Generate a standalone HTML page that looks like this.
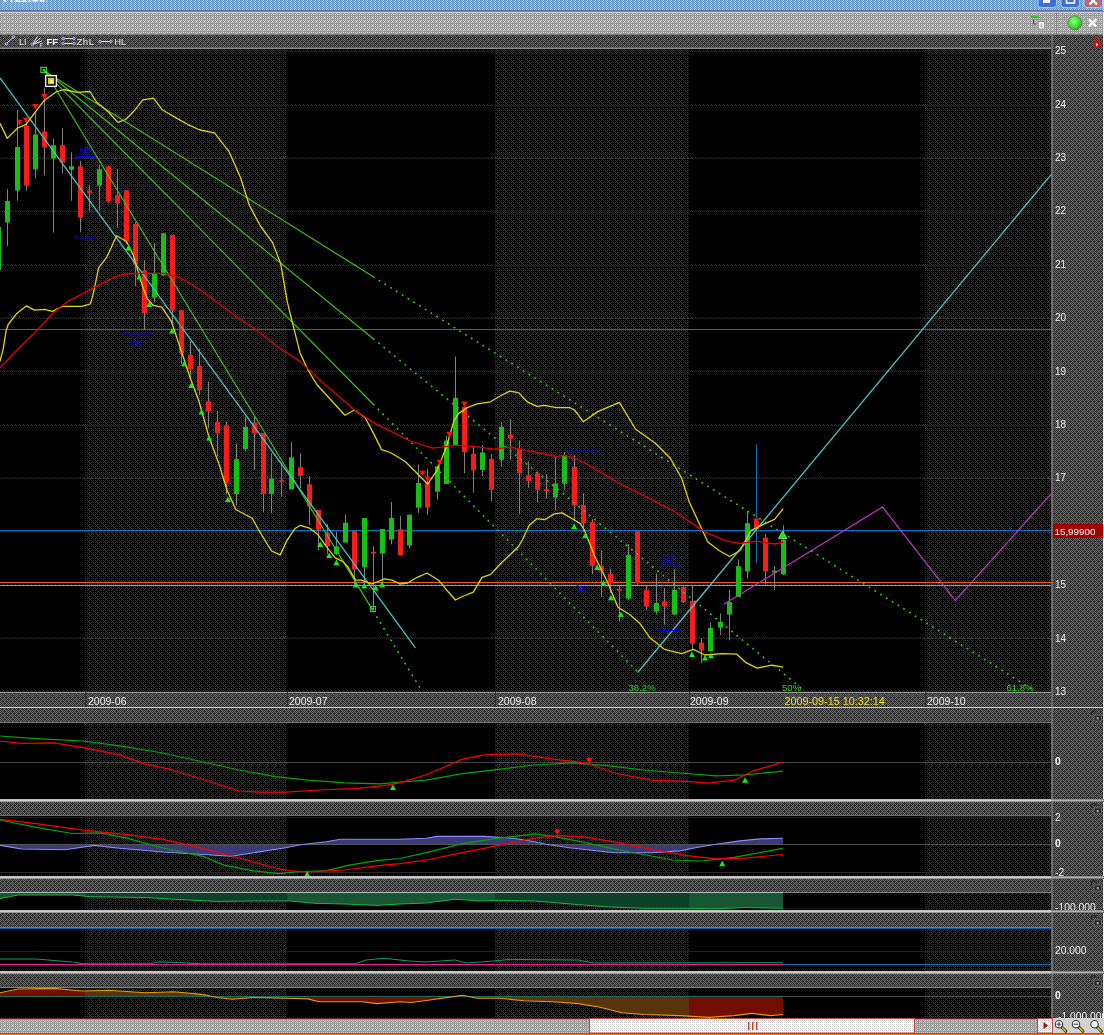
<!DOCTYPE html>
<html><head><meta charset="utf-8"><title>Chart</title>
<style>
html,body{margin:0;padding:0;background:#484848;overflow:hidden}
svg{display:block;will-change:transform}
text{font-family:"Liberation Sans",sans-serif}
</style></head><body>
<svg width="1104" height="1035" viewBox="0 0 1104 1035" font-family="'Liberation Sans', sans-serif">
<defs>
<pattern id="pB" width="8" height="8" patternUnits="userSpaceOnUse" shape-rendering="crispEdges">
<rect width="8" height="8" fill="#000000"/>
<path d="M1 0h1v1h-1zM3 0h1v1h-1zM5 0h1v1h-1zM7 0h1v1h-1zM1 2h1v1h-1zM3 2h1v1h-1zM5 2h1v1h-1zM7 2h1v1h-1zM1 4h1v1h-1zM3 4h1v1h-1zM5 4h1v1h-1zM7 4h1v1h-1zM1 6h1v1h-1zM3 6h1v1h-1zM5 6h1v1h-1zM7 6h1v1h-1zM4 1h1v1h-1zM0 5h1v1h-1zM4 5h1v1h-1zM0 1h1v1h-1zM2 7h1v1h-1zM6 3h1v1h-1z" fill="#333333"/>
</pattern>
<pattern id="pC" width="8" height="8" patternUnits="userSpaceOnUse" shape-rendering="crispEdges">
<rect width="8" height="8" fill="#333333"/>
<path d="M1 0h1v1h-1zM3 0h1v1h-1zM5 0h1v1h-1zM7 0h1v1h-1zM1 2h1v1h-1zM3 2h1v1h-1zM5 2h1v1h-1zM7 2h1v1h-1zM1 4h1v1h-1zM3 4h1v1h-1zM5 4h1v1h-1zM7 4h1v1h-1zM1 6h1v1h-1zM3 6h1v1h-1zM5 6h1v1h-1zM7 6h1v1h-1zM4 1h1v1h-1zM0 5h1v1h-1zM4 5h1v1h-1zM0 1h1v1h-1zM2 7h1v1h-1zM6 3h1v1h-1zM6 7h1v1h-1zM0 7h1v1h-1zM2 3h1v1h-1zM4 3h1v1h-1z" fill="#666666"/>
</pattern>
<pattern id="pA" width="8" height="8" patternUnits="userSpaceOnUse" shape-rendering="crispEdges">
<rect width="8" height="8" fill="#999999"/>
<path d="M1 0h1v1h-1zM3 0h1v1h-1zM5 0h1v1h-1zM7 0h1v1h-1zM1 2h1v1h-1zM3 2h1v1h-1zM5 2h1v1h-1zM7 2h1v1h-1zM1 4h1v1h-1zM3 4h1v1h-1zM5 4h1v1h-1zM7 4h1v1h-1zM1 6h1v1h-1zM3 6h1v1h-1zM5 6h1v1h-1zM7 6h1v1h-1zM4 1h1v1h-1zM0 5h1v1h-1zM4 5h1v1h-1z" fill="#cccccc"/>
</pattern>
<pattern id="pD" width="8" height="8" patternUnits="userSpaceOnUse" shape-rendering="crispEdges">
<rect width="8" height="8" fill="#ffffff"/>
<path d="M0 0h1v1h-1zM2 0h1v1h-1zM4 0h1v1h-1zM6 0h1v1h-1zM0 2h1v1h-1zM2 2h1v1h-1zM4 2h1v1h-1zM6 2h1v1h-1zM0 4h1v1h-1zM2 4h1v1h-1zM4 4h1v1h-1zM6 4h1v1h-1zM0 6h1v1h-1zM2 6h1v1h-1zM4 6h1v1h-1zM6 6h1v1h-1zM1 5h1v1h-1zM5 5h1v1h-1zM1 1h1v1h-1z" fill="#cccccc"/>
</pattern>
<pattern id="pT" width="4" height="2" patternUnits="userSpaceOnUse" shape-rendering="crispEdges">
<rect width="4" height="2" fill="#6699cc"/>
<path d="M1 0h1v1h-1zM0 1h1v1h-1z" fill="#9999ff"/><path d="M3 0h1v1h-1zM2 1h1v1h-1z" fill="#99ccff"/>
</pattern>
</defs>
<rect x="0" y="0" width="1104" height="1035" fill="url(#pC)"/>
<rect x="0" y="0" width="1104" height="10" fill="url(#pT)"/>
<rect x="0" y="10" width="1104" height="1" fill="#646eaa"/>
<rect x="0" y="11" width="1104" height="1" fill="#ff6600"/>
<rect x="0" y="12" width="1104" height="1" fill="#c6cece"/>
<rect x="0" y="13" width="1104" height="21" fill="url(#pA)"/>
<rect x="0" y="34" width="1104" height="1" fill="#808080"/>
<rect x="0" y="35" width="1104" height="12" fill="url(#pC)"/>
<rect x="0" y="47" width="1051" height="1" fill="#666"/>
<rect x="0" y="48" width="1051" height="1" fill="#8a8a8a"/>
<g>
<rect x="1038" y="-6" width="18.5" height="13.5" rx="3" fill="#3b6fd9" stroke="#a8c8ff" stroke-width="1"/>
<rect x="1061" y="-6" width="18.5" height="13.5" rx="3" fill="#3b6fd9" stroke="#a8c8ff" stroke-width="1"/>
<rect x="1084" y="-6" width="18.5" height="13.5" rx="3" fill="#b06a78" stroke="#a8c8ff" stroke-width="1"/>
<rect x="1043" y="0" width="7" height="3" fill="#fff"/>
<rect x="1066.5" y="-4" width="8" height="7" fill="none" stroke="#fff" stroke-width="1.6"/>
<path d="M1089.5 -3 L1097 4.5 M1097 -3 L1089.5 4.5" stroke="#fff" stroke-width="2.2"/>
</g>
<text x="2" y="1.6" fill="#fff" font-size="13" font-weight="bold">7:11:36</text>
<rect x="1056" y="13" width="1" height="21" fill="#808080"/>
<defs><radialGradient id="gb" cx="0.45" cy="0.4" r="0.6"><stop offset="0" stop-color="#9cff8c"/><stop offset="0.6" stop-color="#44e23a"/><stop offset="1" stop-color="#2aa82a"/></radialGradient></defs>
<circle cx="1074.8" cy="22.8" r="7" fill="url(#gb)" stroke="#4a8a4a" stroke-width="0.8"/>
<path d="M1088.8 19 L1096.4 26.6 M1096.4 19 L1088.8 26.6" stroke="#fff" stroke-width="2.2"/>
<rect x="1031" y="16" width="8" height="2" fill="#22cc22"/>
<path d="M1033.5 19 v5 h3" fill="none" stroke="#555" stroke-width="1"/>
<rect x="1038.5" y="21.5" width="6" height="7.5" fill="#fff" stroke="#888" stroke-width="0.8"/>
<rect x="1040.5" y="23.5" width="2" height="4" fill="#bbb"/>
<g stroke="#e4e4e4" stroke-width="1" fill="none">
<path d="M6.5 43.5 L13 37.5"/>
<path d="M32.5 44.5 L37.5 36.5 M32.5 44.5 L40.5 38 M32.5 44.5 L42 41"/>
<path d="M63.5 38.5 H73.5 M63.5 43.5 H73.5"/>
<path d="M100.5 41.5 H110.5"/>
</g>
<circle cx="6.5" cy="44" r="1.3" fill="#6060e0" stroke="#ddd" stroke-width="0.6"/>
<circle cx="13.5" cy="37" r="1.3" fill="#6060e0" stroke="#ddd" stroke-width="0.6"/>
<circle cx="32.5" cy="44.5" r="1.3" fill="#6060e0" stroke="#ddd" stroke-width="0.6"/>
<circle cx="63" cy="38.5" r="1.3" fill="#6060e0" stroke="#ddd" stroke-width="0.6"/>
<circle cx="74" cy="38.5" r="1.3" fill="#6060e0" stroke="#ddd" stroke-width="0.6"/>
<circle cx="63" cy="43.5" r="1.3" fill="#6060e0" stroke="#ddd" stroke-width="0.6"/>
<circle cx="74" cy="43.5" r="1.3" fill="#6060e0" stroke="#ddd" stroke-width="0.6"/>
<circle cx="100" cy="41.5" r="1.3" fill="#6060e0" stroke="#ddd" stroke-width="0.6"/>
<circle cx="111" cy="41.5" r="1.3" fill="#6060e0" stroke="#ddd" stroke-width="0.6"/>
<text x="19" y="45" fill="#e4e4e4" font-size="9">LI</text>
<text x="39.5" y="46.5" fill="#e4e4e4" font-size="5.5">F</text>
<text x="46.5" y="45" fill="#fff" font-size="9.5" font-weight="bold">FF</text>
<text x="76.5" y="45" fill="#e4e4e4" font-size="9.6" letter-spacing="0.5">ZhL</text>
<text x="114.5" y="45" fill="#e4e4e4" font-size="9">HL</text>
<rect x="0" y="49" width="1051" height="643" fill="#000"/>
<rect x="85" y="49" width="202" height="643" fill="url(#pB)"/>
<rect x="495" y="49" width="194" height="643" fill="url(#pB)"/>
<rect x="925" y="49" width="126" height="643" fill="url(#pB)"/>
<clipPath id="cc"><rect x="0" y="49" width="1051" height="643"/></clipPath>
<g clip-path="url(#cc)">
<path d="M0 51.5H1051" stroke="#333" stroke-width="1" stroke-dasharray="1 1" shape-rendering="crispEdges"/>
<path d="M3 50.5H1051" stroke="#333" stroke-width="1" stroke-dasharray="1 3" shape-rendering="crispEdges"/>
<path d="M0 105.5H1051" stroke="#333" stroke-width="1" stroke-dasharray="1 1" shape-rendering="crispEdges"/>
<path d="M3 104.5H1051" stroke="#333" stroke-width="1" stroke-dasharray="1 3" shape-rendering="crispEdges"/>
<path d="M0 158.5H1051" stroke="#333" stroke-width="1" stroke-dasharray="1 1" shape-rendering="crispEdges"/>
<path d="M3 157.5H1051" stroke="#333" stroke-width="1" stroke-dasharray="1 3" shape-rendering="crispEdges"/>
<path d="M0 211.5H1051" stroke="#333" stroke-width="1" stroke-dasharray="1 1" shape-rendering="crispEdges"/>
<path d="M3 210.5H1051" stroke="#333" stroke-width="1" stroke-dasharray="1 3" shape-rendering="crispEdges"/>
<path d="M0 265.5H1051" stroke="#333" stroke-width="1" stroke-dasharray="1 1" shape-rendering="crispEdges"/>
<path d="M3 264.5H1051" stroke="#333" stroke-width="1" stroke-dasharray="1 3" shape-rendering="crispEdges"/>
<path d="M0 318.5H1051" stroke="#333" stroke-width="1" stroke-dasharray="1 1" shape-rendering="crispEdges"/>
<path d="M3 317.5H1051" stroke="#333" stroke-width="1" stroke-dasharray="1 3" shape-rendering="crispEdges"/>
<path d="M0 371.5H1051" stroke="#333" stroke-width="1" stroke-dasharray="1 1" shape-rendering="crispEdges"/>
<path d="M3 370.5H1051" stroke="#333" stroke-width="1" stroke-dasharray="1 3" shape-rendering="crispEdges"/>
<path d="M0 425.5H1051" stroke="#333" stroke-width="1" stroke-dasharray="1 1" shape-rendering="crispEdges"/>
<path d="M3 424.5H1051" stroke="#333" stroke-width="1" stroke-dasharray="1 3" shape-rendering="crispEdges"/>
<path d="M0 478.5H1051" stroke="#333" stroke-width="1" stroke-dasharray="1 1" shape-rendering="crispEdges"/>
<path d="M3 477.5H1051" stroke="#333" stroke-width="1" stroke-dasharray="1 3" shape-rendering="crispEdges"/>
<path d="M0 531.5H1051" stroke="#333" stroke-width="1" stroke-dasharray="1 1" shape-rendering="crispEdges"/>
<path d="M3 530.5H1051" stroke="#333" stroke-width="1" stroke-dasharray="1 3" shape-rendering="crispEdges"/>
<path d="M0 585.5H1051" stroke="#333" stroke-width="1" stroke-dasharray="1 1" shape-rendering="crispEdges"/>
<path d="M3 584.5H1051" stroke="#333" stroke-width="1" stroke-dasharray="1 3" shape-rendering="crispEdges"/>
<path d="M0 638.5H1051" stroke="#333" stroke-width="1" stroke-dasharray="1 1" shape-rendering="crispEdges"/>
<path d="M3 637.5H1051" stroke="#333" stroke-width="1" stroke-dasharray="1 3" shape-rendering="crispEdges"/>
<path d="M0 691.5H1051" stroke="#333" stroke-width="1" stroke-dasharray="1 1" shape-rendering="crispEdges"/>
<path d="M3 690.5H1051" stroke="#333" stroke-width="1" stroke-dasharray="1 3" shape-rendering="crispEdges"/>
<rect x="0" y="329" width="1051" height="1" fill="#1070c0"/>
<rect x="0" y="530" width="1051" height="1" fill="#1070c0"/>
<rect x="0" y="582" width="1051" height="1" fill="#f06000"/>
<rect x="0" y="585" width="1051" height="1" fill="#60c838"/>
<rect x="-2" y="200.0" width="1" height="90.0" fill="#808080"/>
<rect x="-4" y="227.0" width="5" height="43.0" fill="#14c014"/>
<rect x="7" y="189.0" width="1" height="57.0" fill="#808080"/>
<rect x="5" y="201.0" width="5" height="21.5" fill="#14c014"/>
<rect x="17" y="110.0" width="1" height="90.7" fill="#808080"/>
<rect x="15" y="147.0" width="5" height="43.6" fill="#14c014"/>
<rect x="26" y="122.4" width="1" height="68.2" fill="#808080"/>
<rect x="24" y="126.0" width="5" height="59.6" fill="#fa1c1c"/>
<rect x="35" y="111.8" width="1" height="66.6" fill="#808080"/>
<rect x="33" y="134.4" width="5" height="35.0" fill="#14c014"/>
<rect x="44" y="87.6" width="1" height="87.9" fill="#808080"/>
<rect x="42" y="131.5" width="5" height="16.0" fill="#fa1c1c"/>
<rect x="53" y="138.8" width="1" height="93.7" fill="#808080"/>
<rect x="51" y="145.2" width="5" height="13.3" fill="#14c014"/>
<rect x="62" y="128.2" width="1" height="45.4" fill="#808080"/>
<rect x="60" y="145.2" width="5" height="17.2" fill="#fa1c1c"/>
<rect x="71" y="152.3" width="1" height="48.4" fill="#808080"/>
<rect x="69" y="166.3" width="5" height="3.4" fill="#14c014"/>
<rect x="80" y="161.0" width="1" height="71.5" fill="#808080"/>
<rect x="78" y="166.3" width="5" height="51.2" fill="#fa1c1c"/>
<rect x="89" y="185.2" width="1" height="26.1" fill="#808080"/>
<rect x="87" y="190.4" width="5" height="2.9" fill="#fa1c1c"/>
<rect x="99" y="165.0" width="1" height="45.3" fill="#808080"/>
<rect x="97" y="169.2" width="5" height="16.4" fill="#14c014"/>
<rect x="108" y="165.9" width="1" height="36.7" fill="#808080"/>
<rect x="106" y="166.3" width="5" height="35.3" fill="#fa1c1c"/>
<rect x="117" y="168.8" width="1" height="58.9" fill="#808080"/>
<rect x="115" y="195.2" width="5" height="8.4" fill="#fa1c1c"/>
<rect x="126" y="190.0" width="1" height="54.0" fill="#808080"/>
<rect x="124" y="190.4" width="5" height="50.9" fill="#fa1c1c"/>
<rect x="135" y="222.0" width="1" height="64.0" fill="#808080"/>
<rect x="133" y="224.0" width="5" height="40.7" fill="#fa1c1c"/>
<rect x="144" y="260.0" width="1" height="69.5" fill="#808080"/>
<rect x="142" y="270.5" width="5" height="42.5" fill="#fa1c1c"/>
<rect x="154" y="243.0" width="1" height="59.0" fill="#808080"/>
<rect x="152" y="273.4" width="5" height="24.2" fill="#14c014"/>
<rect x="163" y="233.2" width="1" height="42.8" fill="#808080"/>
<rect x="161" y="233.2" width="5" height="42.2" fill="#14c014"/>
<rect x="172" y="235.2" width="1" height="88.5" fill="#808080"/>
<rect x="170" y="235.2" width="5" height="75.3" fill="#fa1c1c"/>
<rect x="181" y="310.0" width="1" height="54.0" fill="#808080"/>
<rect x="179" y="310.0" width="5" height="43.6" fill="#fa1c1c"/>
<rect x="190" y="341.0" width="1" height="39.0" fill="#808080"/>
<rect x="188" y="355.0" width="5" height="14.0" fill="#fa1c1c"/>
<rect x="199" y="349.0" width="1" height="46.0" fill="#808080"/>
<rect x="197" y="366.0" width="5" height="24.0" fill="#fa1c1c"/>
<rect x="208" y="382.0" width="1" height="46.0" fill="#808080"/>
<rect x="206" y="401.3" width="5" height="10.0" fill="#fa1c1c"/>
<rect x="217" y="411.0" width="1" height="45.0" fill="#808080"/>
<rect x="215" y="422.0" width="5" height="11.0" fill="#fa1c1c"/>
<rect x="226" y="421.5" width="1" height="72.5" fill="#808080"/>
<rect x="224" y="425.4" width="5" height="58.0" fill="#fa1c1c"/>
<rect x="236" y="443.4" width="1" height="62.2" fill="#808080"/>
<rect x="234" y="459.2" width="5" height="34.8" fill="#14c014"/>
<rect x="245" y="416.7" width="1" height="34.8" fill="#808080"/>
<rect x="243" y="427.0" width="5" height="22.0" fill="#14c014"/>
<rect x="254" y="416.7" width="1" height="53.2" fill="#808080"/>
<rect x="252" y="422.5" width="5" height="10.5" fill="#fa1c1c"/>
<rect x="263" y="433.0" width="1" height="79.4" fill="#808080"/>
<rect x="261" y="433.0" width="5" height="61.0" fill="#fa1c1c"/>
<rect x="271" y="453.4" width="1" height="59.9" fill="#808080"/>
<rect x="269" y="478.6" width="5" height="15.4" fill="#14c014"/>
<rect x="281" y="463.0" width="1" height="34.0" fill="#808080"/>
<rect x="279" y="480.0" width="5" height="1.6" fill="#fa1c1c"/>
<rect x="291" y="442.2" width="1" height="47.0" fill="#808080"/>
<rect x="289" y="457.3" width="5" height="31.9" fill="#14c014"/>
<rect x="300" y="453.4" width="1" height="34.8" fill="#808080"/>
<rect x="298" y="467.3" width="5" height="8.7" fill="#fa1c1c"/>
<rect x="309" y="476.0" width="1" height="49.0" fill="#808080"/>
<rect x="307" y="484.3" width="5" height="22.3" fill="#fa1c1c"/>
<rect x="318" y="509.9" width="1" height="40.1" fill="#808080"/>
<rect x="316" y="509.9" width="5" height="19.9" fill="#fa1c1c"/>
<rect x="327" y="524.0" width="1" height="30.0" fill="#808080"/>
<rect x="325" y="532.7" width="5" height="13.5" fill="#fa1c1c"/>
<rect x="336" y="531.7" width="1" height="23.3" fill="#808080"/>
<rect x="334" y="546.2" width="5" height="7.8" fill="#14c014"/>
<rect x="345" y="514.3" width="1" height="28.2" fill="#808080"/>
<rect x="343" y="522.8" width="5" height="19.7" fill="#14c014"/>
<rect x="354" y="531.0" width="1" height="54.0" fill="#808080"/>
<rect x="352" y="531.0" width="5" height="38.5" fill="#fa1c1c"/>
<rect x="364" y="518.0" width="1" height="67.0" fill="#808080"/>
<rect x="362" y="518.0" width="5" height="49.3" fill="#14c014"/>
<rect x="373" y="546.4" width="1" height="61.8" fill="#808080"/>
<rect x="371" y="551.8" width="5" height="1.6" fill="#fa1c1c"/>
<rect x="382" y="529.0" width="1" height="56.0" fill="#808080"/>
<rect x="380" y="529.0" width="5" height="24.5" fill="#14c014"/>
<rect x="391" y="502.0" width="1" height="42.4" fill="#808080"/>
<rect x="389" y="518.0" width="5" height="21.5" fill="#14c014"/>
<rect x="400" y="516.0" width="1" height="39.6" fill="#808080"/>
<rect x="398" y="529.2" width="5" height="26.1" fill="#fa1c1c"/>
<rect x="409" y="514.5" width="1" height="33.8" fill="#808080"/>
<rect x="407" y="514.7" width="5" height="30.7" fill="#14c014"/>
<rect x="418" y="464.6" width="1" height="48.4" fill="#808080"/>
<rect x="416" y="483.0" width="5" height="24.7" fill="#14c014"/>
<rect x="427" y="468.5" width="1" height="46.4" fill="#808080"/>
<rect x="425" y="482.0" width="5" height="25.7" fill="#fa1c1c"/>
<rect x="437" y="465.6" width="1" height="33.8" fill="#808080"/>
<rect x="435" y="466.6" width="5" height="25.1" fill="#14c014"/>
<rect x="446" y="435.7" width="1" height="48.3" fill="#808080"/>
<rect x="444" y="440.5" width="5" height="43.5" fill="#14c014"/>
<rect x="455" y="356.4" width="1" height="88.9" fill="#808080"/>
<rect x="453" y="398.0" width="5" height="47.3" fill="#14c014"/>
<rect x="464" y="405.7" width="1" height="67.6" fill="#808080"/>
<rect x="462" y="406.7" width="5" height="45.3" fill="#fa1c1c"/>
<rect x="473" y="447.2" width="1" height="45.5" fill="#808080"/>
<rect x="471" y="454.0" width="5" height="16.4" fill="#fa1c1c"/>
<rect x="482" y="445.3" width="1" height="30.9" fill="#808080"/>
<rect x="480" y="452.5" width="5" height="17.4" fill="#14c014"/>
<rect x="491" y="454.0" width="1" height="47.4" fill="#808080"/>
<rect x="489" y="458.8" width="5" height="31.0" fill="#fa1c1c"/>
<rect x="501" y="422.0" width="1" height="44.6" fill="#808080"/>
<rect x="499" y="427.0" width="5" height="32.8" fill="#14c014"/>
<rect x="510" y="418.8" width="1" height="41.0" fill="#808080"/>
<rect x="508" y="434.7" width="5" height="3.9" fill="#fa1c1c"/>
<rect x="519" y="440.5" width="1" height="73.4" fill="#808080"/>
<rect x="517" y="449.2" width="5" height="24.1" fill="#fa1c1c"/>
<rect x="528" y="461.7" width="1" height="26.1" fill="#808080"/>
<rect x="526" y="475.3" width="5" height="5.7" fill="#fa1c1c"/>
<rect x="537" y="473.3" width="1" height="29.0" fill="#808080"/>
<rect x="535" y="473.3" width="5" height="16.5" fill="#fa1c1c"/>
<rect x="546" y="474.3" width="1" height="24.2" fill="#808080"/>
<rect x="544" y="489.2" width="5" height="1.9" fill="#fa1c1c"/>
<rect x="555" y="456.0" width="1" height="54.0" fill="#808080"/>
<rect x="553" y="483.4" width="5" height="14.1" fill="#14c014"/>
<rect x="564" y="452.0" width="1" height="37.8" fill="#808080"/>
<rect x="562" y="455.2" width="5" height="28.5" fill="#14c014"/>
<rect x="574" y="455.0" width="1" height="66.2" fill="#808080"/>
<rect x="572" y="467.0" width="5" height="38.1" fill="#fa1c1c"/>
<rect x="583" y="493.2" width="1" height="38.7" fill="#808080"/>
<rect x="581" y="505.1" width="5" height="18.3" fill="#fa1c1c"/>
<rect x="592" y="519.0" width="1" height="55.0" fill="#808080"/>
<rect x="590" y="521.7" width="5" height="44.1" fill="#fa1c1c"/>
<rect x="601" y="550.7" width="1" height="46.3" fill="#808080"/>
<rect x="599" y="565.8" width="5" height="5.8" fill="#fa1c1c"/>
<rect x="610" y="568.7" width="1" height="24.1" fill="#808080"/>
<rect x="608" y="574.0" width="5" height="9.2" fill="#fa1c1c"/>
<rect x="619" y="585.5" width="1" height="36.2" fill="#808080"/>
<rect x="617" y="589.0" width="5" height="1.7" fill="#fa1c1c"/>
<rect x="628" y="544.0" width="1" height="56.0" fill="#808080"/>
<rect x="626" y="555.0" width="5" height="43.6" fill="#14c014"/>
<rect x="637" y="531.0" width="1" height="54.0" fill="#808080"/>
<rect x="635" y="531.0" width="5" height="52.2" fill="#fa1c1c"/>
<rect x="646" y="585.5" width="1" height="24.6" fill="#808080"/>
<rect x="644" y="589.9" width="5" height="16.5" fill="#fa1c1c"/>
<rect x="656" y="574.0" width="1" height="40.5" fill="#808080"/>
<rect x="654" y="603.0" width="5" height="8.6" fill="#14c014"/>
<rect x="664" y="587.8" width="1" height="36.8" fill="#808080"/>
<rect x="662" y="601.4" width="5" height="5.0" fill="#fa1c1c"/>
<rect x="674" y="569.0" width="1" height="45.5" fill="#808080"/>
<rect x="672" y="589.9" width="5" height="24.6" fill="#14c014"/>
<rect x="683" y="585.5" width="1" height="17.5" fill="#808080"/>
<rect x="681" y="587.0" width="5" height="15.0" fill="#fa1c1c"/>
<rect x="692" y="585.6" width="1" height="63.3" fill="#808080"/>
<rect x="690" y="601.0" width="5" height="42.6" fill="#fa1c1c"/>
<rect x="701" y="638.0" width="1" height="25.2" fill="#808080"/>
<rect x="699" y="642.7" width="5" height="7.8" fill="#fa1c1c"/>
<rect x="710" y="622.3" width="1" height="29.3" fill="#808080"/>
<rect x="708" y="628.0" width="5" height="23.3" fill="#14c014"/>
<rect x="720" y="613.6" width="1" height="21.4" fill="#808080"/>
<rect x="718" y="621.8" width="5" height="5.8" fill="#14c014"/>
<rect x="729" y="590.0" width="1" height="50.3" fill="#808080"/>
<rect x="727" y="602.0" width="5" height="12.6" fill="#14c014"/>
<rect x="738" y="559.6" width="1" height="37.4" fill="#808080"/>
<rect x="736" y="566.2" width="5" height="30.7" fill="#14c014"/>
<rect x="747" y="511.0" width="1" height="67.5" fill="#808080"/>
<rect x="745" y="523.1" width="5" height="48.3" fill="#14c014"/>
<rect x="765" y="534.0" width="1" height="50.6" fill="#808080"/>
<rect x="763" y="537.6" width="5" height="33.8" fill="#fa1c1c"/>
<rect x="774" y="566.2" width="1" height="23.5" fill="#808080"/>
<rect x="772" y="570.6" width="5" height="1.9" fill="#14c014"/>
<rect x="783" y="525.4" width="1" height="49.6" fill="#808080"/>
<rect x="781" y="539.7" width="5" height="34.7" fill="#14c014"/>
<rect x="756" y="444.5" width="1" height="118.79999999999995" fill="#1070c0"/>
<rect x="754" y="521" width="5" height="8" fill="#fa1c1c"/>
<line x1="43.7" y1="69.3" x2="373.0" y2="610.6" stroke="#3cc814" stroke-width="1.15"/>
<line x1="373.0" y1="610.6" x2="422.1" y2="691.3" stroke="#3cc814" stroke-width="1.6" stroke-dasharray="1.8 5"/>
<line x1="43.7" y1="70.6" x2="373.0" y2="404.0" stroke="#3cc814" stroke-width="1.15"/>
<line x1="373.0" y1="404.0" x2="639.8" y2="674.0" stroke="#3cc814" stroke-width="1.6" stroke-dasharray="1.8 5"/>
<line x1="43.7" y1="69.7" x2="373.0" y2="338.5" stroke="#3cc814" stroke-width="1.15"/>
<line x1="373.0" y1="338.5" x2="805.2" y2="691.3" stroke="#3cc814" stroke-width="1.6" stroke-dasharray="1.8 5"/>
<line x1="43.7" y1="70.5" x2="373.0" y2="276.6" stroke="#3cc814" stroke-width="1.15"/>
<line x1="373.0" y1="276.6" x2="1035.0" y2="691.0" stroke="#3cc814" stroke-width="1.6" stroke-dasharray="1.8 5"/>
<line x1="0.0" y1="78.0" x2="415.4" y2="647.8" stroke="#48c4c4" stroke-width="1.3"/>
<line x1="637.7" y1="672.5" x2="1052.0" y2="173.5" stroke="#48c4c4" stroke-width="1.3"/>
<polyline points="723.8,604.3 882.5,507.0 955.3,600.6 1052.0,492.7" fill="none" stroke="#cc33cc" stroke-width="1.2"/>
<polyline points="0.0,123.4 7.3,138.4 17.4,128.2 26.1,124.3 35.4,111.8 44.4,100.2 56.0,92.0 63.8,89.5 77.3,92.4 89.9,91.5 96.6,102.1 108.2,111.8 117.9,122.4 125.6,119.5 133.3,111.8 143.0,99.8 153.6,98.2 162.3,109.8 173.9,116.6 187.4,124.3 200.0,130.0 214.5,132.8 229.0,151.6 240.6,177.7 249.3,205.2 260.4,226.0 272.6,242.7 280.7,263.8 287.4,302.4 293.2,325.6 300.0,352.7 307.0,368.0 314.0,380.0 317.9,385.8 344.9,415.2 354.6,410.0 365.2,417.7 373.9,434.1 381.6,449.6 390.3,452.5 400.0,458.3 405.5,461.7 427.7,484.0 436.4,471.4 446.0,448.2 453.8,421.2 458.6,413.4 467.3,407.6 477.0,403.8 490.5,401.8 500.1,396.0 509.8,391.2 518.5,392.6 527.2,401.8 536.9,406.3 544.6,405.3 556.2,407.6 569.7,407.6 574.5,410.0 583.2,421.7 597.7,411.6 619.4,402.3 635.4,429.0 655.7,443.5 670.1,458.0 681.7,478.3 689.0,501.4 699.1,523.2 707.8,542.0 719.4,550.7 729.6,556.5 739.7,550.7 751.3,530.4 762.9,524.6 774.5,519.4 783.2,508.7" fill="none" stroke="#e0d800" stroke-width="1.3" stroke-linejoin="round"/>
<polyline points="0.0,361.4 3.3,348.3 6.2,330.2 8.2,324.5 16.4,313.8 26.3,305.9 34.5,310.2 44.4,309.3 52.6,311.3 62.4,306.4 82.1,306.4 90.4,303.9 93.6,292.4 98.6,267.8 106.8,257.1 116.6,235.7 126.5,241.5 133.1,254.6 138.0,271.0 142.9,287.5 147.3,298.6 153.1,305.3 161.8,307.2 171.5,321.7 177.3,339.1 183.1,356.5 190.8,379.7 198.6,400.0 208.7,436.0 219.3,465.0 227.0,490.0 235.7,509.5 252.2,518.2 258.0,528.8 271.5,551.0 280.2,554.9 287.0,540.4 294.7,528.8 300.5,525.3 310.1,528.4 317.9,534.6 327.5,548.1 335.3,557.8 343.0,561.6 347.7,566.7 355.5,580.2 361.3,580.2 371.9,584.0 384.4,578.8 392.2,580.2 399.9,584.0 407.6,583.0 417.3,577.3 427.0,573.0 438.6,580.2 448.2,591.8 455.4,600.0 463.7,596.0 473.3,592.2 482.0,577.3 490.7,574.4 500.4,563.8 517.8,547.3 522.4,540.0 529.1,525.5 536.9,518.7 544.6,519.7 554.3,513.9 562.0,512.9 573.6,519.5 580.3,523.6 584.6,530.4 594.8,556.5 606.4,579.7 618.0,607.2 629.6,614.5 639.7,623.2 649.9,637.7 664.3,649.3 681.7,653.6 693.3,649.3 704.9,655.0 722.3,653.6 736.8,654.2 745.5,662.3 757.1,668.1 771.6,665.2 783.2,667.2" fill="none" stroke="#e0d800" stroke-width="1.3" stroke-linejoin="round"/>
<polyline points="0.0,368.0 16.4,350.7 37.8,329.4 54.2,312.0 69.0,300.6 85.4,292.4 101.9,283.4 115.0,276.8 124.9,274.0 138.6,273.4 163.8,273.4 181.2,278.3 200.5,289.9 219.8,304.3 239.1,318.8 254.6,328.5 273.9,344.0 300.0,361.4 319.8,380.0 339.1,396.4 354.6,410.0 373.9,422.9 390.0,430.8 409.3,440.5 432.5,448.2 455.7,445.3 473.1,446.3 494.3,449.2 509.8,447.2 525.3,450.1 544.6,454.0 556.2,456.5 563.9,455.4 574.5,458.0 589.0,465.2 618.0,482.6 647.0,497.1 676.0,512.5 705.0,531.9 725.2,540.6 739.7,543.5 757.1,541.2 774.5,544.0 783.2,542.0" fill="none" stroke="#e00000" stroke-width="1.3" stroke-linejoin="round"/>
<path d="M16.1 119.8 h6.4 l-3.2 5.6 z" fill="#ff1010"/>
<path d="M22.8 117.4 h6.4 l-3.2 5.6 z" fill="#ff1010"/>
<path d="M32.2 103.9 h6.4 l-3.2 5.6 z" fill="#ff1010"/>
<path d="M41.2 94.1 h6.4 l-3.2 5.6 z" fill="#ff1010"/>
<path d="M178.3 321.1 h6.4 l-3.2 5.6 z" fill="#ff1010"/>
<path d="M419.3 470.7 h6.4 l-3.2 5.6 z" fill="#ff1010"/>
<path d="M424.5 476.5 h6.4 l-3.2 5.6 z" fill="#ff1010"/>
<path d="M436.5 459.7 h6.4 l-3.2 5.6 z" fill="#ff1010"/>
<path d="M446.3 432.1 h6.4 l-3.2 5.6 z" fill="#ff1010"/>
<path d="M461.2 401.6 h6.4 l-3.2 5.6 z" fill="#ff1010"/>
<path d="M753.0 518.4 h6.4 l-3.2 5.6 z" fill="#ff1010"/>
<path d="M125.4 250.6 h6 l-3 -5.6 z" fill="#10f010"/>
<path d="M136.2 279.6 h6 l-3 -5.6 z" fill="#10f010"/>
<path d="M146.3 306.9 h6 l-3 -5.6 z" fill="#10f010"/>
<path d="M169.0 333.6 h6 l-3 -5.6 z" fill="#10f010"/>
<path d="M181.2 366.3 h6 l-3 -5.6 z" fill="#10f010"/>
<path d="M188.2 388.1 h6 l-3 -5.6 z" fill="#10f010"/>
<path d="M198.5 414.6 h6 l-3 -5.6 z" fill="#10f010"/>
<path d="M206.0 440.6 h6 l-3 -5.6 z" fill="#10f010"/>
<path d="M225.0 502.0 h6 l-3 -5.6 z" fill="#10f010"/>
<path d="M317.2 546.9 h6 l-3 -5.6 z" fill="#10f010"/>
<path d="M326.1 558.1 h6 l-3 -5.6 z" fill="#10f010"/>
<path d="M333.4 565.2 h6 l-3 -5.6 z" fill="#10f010"/>
<path d="M352.8 587.6 h6 l-3 -5.6 z" fill="#10f010"/>
<path d="M361.2 588.6 h6 l-3 -5.6 z" fill="#10f010"/>
<path d="M372.7 590.6 h6 l-3 -5.6 z" fill="#10f010"/>
<path d="M379.1 587.2 h6 l-3 -5.6 z" fill="#10f010"/>
<path d="M571.2 529.1 h6 l-3 -5.6 z" fill="#10f010"/>
<path d="M582.2 538.3 h6 l-3 -5.6 z" fill="#10f010"/>
<path d="M594.1 570.1 h6 l-3 -5.6 z" fill="#10f010"/>
<path d="M600.5 585.8 h6 l-3 -5.6 z" fill="#10f010"/>
<path d="M608.0 600.3 h6 l-3 -5.6 z" fill="#10f010"/>
<path d="M617.9 617.1 h6 l-3 -5.6 z" fill="#10f010"/>
<path d="M688.9 657.1 h6 l-3 -5.6 z" fill="#10f010"/>
<path d="M702.0 660.6 h6 l-3 -5.6 z" fill="#10f010"/>
<path d="M708.0 658.3 h6 l-3 -5.6 z" fill="#10f010"/>
<path d="M778.5 538.5 h8.4 l-4.2 -7.6 z" fill="#10f010" stroke="#b0e060" stroke-width="0.8"/>
<path d="M76 159.5 v-3 h19 v3 M76 235 v3 h19 v-3" fill="none" stroke="#0000f0" stroke-width="1.2"/>
<text x="85.5" y="152.5" fill="#0000f0" font-size="9" text-anchor="middle">HP</text>
<path d="M122 188.5 v-3 h28 v3 M122 331 v3 h28 v-3" fill="none" stroke="#0000f0" stroke-width="1.2"/>
<text x="136" y="346" fill="#0000f0" font-size="9" text-anchor="middle" font-weight="bold">ltC</text>
<path d="M569 454 v-3 h27 v3 M569 576.5 v3 h27 v-3" fill="none" stroke="#0000f0" stroke-width="1.2"/>
<text x="582.5" y="591.5" fill="#0000f0" font-size="9" text-anchor="middle" font-weight="bold">ltC</text>
<path d="M660 568 v-3 h19 v3 M660 627.5 v3 h19 v-3" fill="none" stroke="#0000f0" stroke-width="1.2"/>
<text x="669.5" y="561" fill="#0000f0" font-size="9" text-anchor="middle">EP</text>
<rect x="40.9" y="67.3" width="5.4" height="5.2" fill="none" stroke="#30d830" stroke-width="1.2"/>
<rect x="42.6" y="69" width="2" height="2" fill="#30d030"/>
<rect x="45.6" y="75.6" width="10.8" height="10.8" fill="#1a1a1a" stroke="#f4f4f4" stroke-width="1.3"/>
<rect x="48" y="78" width="6" height="6" fill="#d8d020"/>
<rect x="50" y="80" width="3" height="3" fill="#fff060"/>
<rect x="370.5" y="606.5" width="5" height="5" fill="none" stroke="#30d030" stroke-width="1"/>
<rect x="372" y="608" width="2" height="2" fill="#30d030"/>
<text x="628.5" y="691.2" fill="#30d820" font-size="9.6">38.2%</text>
<text x="782" y="691.2" fill="#30d820" font-size="9.6">50%</text>
<text x="1006.5" y="691.2" fill="#30d820" font-size="9.6">61.8%</text>
</g>
<rect x="0" y="692" width="1051" height="15" fill="url(#pC)"/>
<rect x="0" y="692" width="1051" height="1" fill="#9c9c9c"/>
<rect x="85" y="692" width="1" height="15" fill="#303030"/>
<rect x="287" y="692" width="1" height="15" fill="#303030"/>
<rect x="495" y="692" width="1" height="15" fill="#303030"/>
<rect x="689" y="692" width="1" height="15" fill="#303030"/>
<rect x="925" y="692" width="1" height="15" fill="#303030"/>
<text x="88" y="704.5" fill="#ececec" font-size="10.5">2009-06</text>
<text x="289" y="704.5" fill="#ececec" font-size="10.5">2009-07</text>
<text x="498" y="704.5" fill="#ececec" font-size="10.5">2009-08</text>
<text x="690" y="704.5" fill="#ececec" font-size="10.5">2009-09</text>
<text x="927" y="704.5" fill="#ececec" font-size="10.5">2009-10</text>
<text x="784.5" y="704.5" fill="#f0e020" font-size="10.8">2009-09-15 10:32:14</text>
<rect x="0" y="707" width="1104" height="1" fill="#c8c8c8"/>
<rect x="0" y="708" width="1051" height="14" fill="url(#pC)"/>
<rect x="0" y="722" width="1051" height="1" fill="#787878"/>
<rect x="0" y="723" width="1051" height="76" fill="#000"/>
<rect x="85" y="723" width="202" height="76" fill="url(#pB)"/>
<rect x="495" y="723" width="194" height="76" fill="url(#pB)"/>
<rect x="925" y="723" width="126" height="76" fill="url(#pB)"/>
<rect x="0" y="762" width="1051" height="1" fill="#464646"/>
<polyline points="0.0,736.0 36.2,738.6 83.3,741.0 119.6,745.8 163.0,753.0 202.9,762.0 239.0,770.0 275.4,776.6 308.0,780.2 344.2,782.8 380.4,783.8 400.0,782.0 426.2,780.2 462.5,773.7 498.7,769.3 534.9,765.0 571.2,762.8 607.4,765.7 643.6,770.0 679.9,773.0 716.1,775.9 745.1,774.8 783.1,771.2" fill="none" stroke="#00aa00" stroke-width="1.2"/>
<polyline points="0.0,741.0 21.7,743.3 54.3,742.9 83.3,747.6 119.6,754.9 145.0,763.9 170.3,769.3 202.9,779.5 239.0,791.0 260.9,792.2 286.2,792.2 318.8,790.0 355.0,788.6 384.0,785.7 400.0,782.8 426.2,774.8 462.5,759.2 484.2,754.9 516.8,753.8 553.0,759.2 585.7,762.8 614.6,773.0 650.9,780.2 687.1,781.3 708.8,783.1 734.2,780.2 752.3,771.2 783.1,762.1" fill="none" stroke="#ff0000" stroke-width="1.2"/>
<rect x="0" y="799" width="1051" height="1" fill="#bbbbbb"/>
<rect x="0" y="800" width="1051" height="1" fill="#cccccc"/>
<rect x="0" y="801" width="1051" height="1" fill="#999999"/>
<rect x="1051" y="799" width="53" height="1" fill="#8a8a8a"/>
<rect x="1051" y="800" width="53" height="1" fill="#b0b0b0"/>
<rect x="1051" y="801" width="53" height="1" fill="#777777"/>
<rect x="0" y="802" width="1051" height="13" fill="url(#pC)"/>
<rect x="0" y="815" width="1051" height="1" fill="#707070"/>
<rect x="0" y="816" width="1051" height="60" fill="#000"/>
<rect x="85" y="816" width="202" height="60" fill="url(#pB)"/>
<rect x="495" y="816" width="194" height="60" fill="url(#pB)"/>
<rect x="925" y="816" width="126" height="60" fill="url(#pB)"/>
<rect x="0" y="872" width="1051" height="1" fill="#2a2a2a"/>
<rect x="0" y="817" width="1051" height="1" fill="#1c1c1c"/>
<polygon points="0,844.5 0.0,845.4 21.7,849.0 65.2,849.8 94.2,845.4 119.6,848.3 163.0,852.0 202.9,854.5 231.9,856.3 253.6,852.7 282.6,848.3 300.7,844.7 326.0,841.8 340.6,839.3 400.0,839.3 426.2,838.2 437.0,836.4 484.2,836.4 513.2,838.2 534.9,841.8 545.8,844.3 571.2,848.0 614.6,852.7 650.9,852.7 679.9,850.9 698.0,847.2 716.1,844.3 737.8,841.1 759.6,838.9 783.1,838.2 783.1,844.5" fill="#3a3a76"/>
<rect x="0" y="844" width="1051" height="1" fill="#555555"/>
<polyline points="0.0,845.4 21.7,849.0 65.2,849.8 94.2,845.4 119.6,848.3 163.0,852.0 202.9,854.5 231.9,856.3 253.6,852.7 282.6,848.3 300.7,844.7 326.0,841.8 340.6,839.3 400.0,839.3 426.2,838.2 437.0,836.4 484.2,836.4 513.2,838.2 534.9,841.8 545.8,844.3 571.2,848.0 614.6,852.7 650.9,852.7 679.9,850.9 698.0,847.2 716.1,844.3 737.8,841.1 759.6,838.9 783.1,838.2" fill="none" stroke="#8c8cff" stroke-width="1.1"/>
<polyline points="0.0,820.0 36.2,827.3 72.5,833.5 101.4,832.8 126.8,838.2 163.0,848.0 202.9,856.3 224.6,865.4 253.6,870.8 279.0,873.7 300.7,871.5 326.0,870.8 347.8,865.4 376.8,860.7 400.0,858.5 426.2,852.7 462.5,843.6 498.7,838.2 534.9,833.8 553.0,836.4 582.0,841.8 614.6,849.1 643.6,854.5 672.6,860.0 701.6,861.0 734.2,857.4 783.1,848.3" fill="none" stroke="#00aa00" stroke-width="1.2"/>
<polyline points="0.0,819.3 36.2,823.7 83.3,830.2 126.8,834.6 163.0,839.3 202.9,848.3 239.0,858.0 275.4,868.0 290.0,870.8 308.0,871.9 344.2,870.0 380.4,865.4 400.0,863.6 426.2,860.0 462.5,852.7 498.7,845.4 534.9,838.2 556.7,835.7 582.0,836.7 614.6,841.8 650.9,849.1 687.1,855.6 716.1,858.8 745.1,858.1 783.1,854.5" fill="none" stroke="#ff0000" stroke-width="1.2"/>
<rect x="0" y="876" width="1051" height="1" fill="#bbbbbb"/>
<rect x="0" y="877" width="1051" height="1" fill="#cccccc"/>
<rect x="0" y="878" width="1051" height="1" fill="#999999"/>
<rect x="1051" y="876" width="53" height="1" fill="#8a8a8a"/>
<rect x="1051" y="877" width="53" height="1" fill="#b0b0b0"/>
<rect x="1051" y="878" width="53" height="1" fill="#777777"/>
<rect x="0" y="879" width="1051" height="13" fill="url(#pC)"/>
<rect x="0" y="892" width="783" height="1" fill="#b4bcbc"/>
<rect x="783" y="892" width="268" height="1" fill="#858585"/>
<rect x="0" y="893" width="1051" height="17" fill="#000"/>
<rect x="85" y="893" width="202" height="17" fill="url(#pB)"/>
<rect x="495" y="893" width="194" height="17" fill="url(#pB)"/>
<rect x="925" y="893" width="126" height="17" fill="url(#pB)"/>
<polygon points="0,893 0.0,898.6 18.0,895.0 72.5,895.0 90.6,896.7 145.0,897.5 181.0,899.6 217.0,901.4 253.6,901.0 290.0,901.0 315.0,903.3 344.0,904.0 377.0,905.4 400.0,904.0 426.0,903.0 455.0,899.3 480.6,901.0 498.7,900.4 535.0,901.0 571.0,904.0 607.4,906.9 643.6,908.3 680.0,908.3 716.0,908.7 745.0,907.6 783.0,908.3 783,893" fill="#185533"/>
<clipPath id="b3"><rect x="85" y="893" width="202" height="17"/><rect x="495" y="893" width="194" height="17"/><rect x="925" y="893" width="126" height="17"/></clipPath>
<polygon points="0,893 0.0,898.6 18.0,895.0 72.5,895.0 90.6,896.7 145.0,897.5 181.0,899.6 217.0,901.4 253.6,901.0 290.0,901.0 315.0,903.3 344.0,904.0 377.0,905.4 400.0,904.0 426.0,903.0 455.0,899.3 480.6,901.0 498.7,900.4 535.0,901.0 571.0,904.0 607.4,906.9 643.6,908.3 680.0,908.3 716.0,908.7 745.0,907.6 783.0,908.3 783,893" fill="#0c4128" clip-path="url(#b3)"/>
<polyline points="0.0,898.6 18.0,895.0 72.5,895.0 90.6,896.7 145.0,897.5 181.0,899.6 217.0,901.4 253.6,901.0 290.0,901.0 315.0,903.3 344.0,904.0 377.0,905.4 400.0,904.0 426.0,903.0 455.0,899.3 480.6,901.0 498.7,900.4 535.0,901.0 571.0,904.0 607.4,906.9 643.6,908.3 680.0,908.3 716.0,908.7 745.0,907.6 783.0,908.3" fill="none" stroke="#10b848" stroke-width="1"/>
<rect x="783" y="908" width="268" height="1" fill="#1c1c1c"/>
<rect x="0" y="910" width="1051" height="1" fill="#bbbbbb"/>
<rect x="0" y="911" width="1051" height="1" fill="#cccccc"/>
<rect x="0" y="912" width="1051" height="1" fill="#999999"/>
<rect x="1051" y="910" width="53" height="1" fill="#8a8a8a"/>
<rect x="1051" y="911" width="53" height="1" fill="#b0b0b0"/>
<rect x="1051" y="912" width="53" height="1" fill="#777777"/>
<rect x="0" y="913" width="1051" height="14" fill="url(#pC)"/>
<rect x="0" y="927" width="1051" height="1" fill="#807878"/>
<rect x="0" y="929" width="1051" height="42" fill="#000"/>
<rect x="85" y="929" width="202" height="42" fill="url(#pB)"/>
<rect x="495" y="929" width="194" height="42" fill="url(#pB)"/>
<rect x="925" y="929" width="126" height="42" fill="url(#pB)"/>
<rect x="0" y="928" width="1051" height="1" fill="#0c58b0"/>
<rect x="0" y="951" width="1051" height="1" fill="#222"/>
<rect x="783" y="964" width="268" height="1" fill="#1070c0"/>
<polyline points="0.0,959.0 36.0,959.0 72.5,962.0 83.0,963.8 150.0,963.8 159.0,962.0 181.0,962.7 200.0,963.8 355.0,963.8 366.0,960.0 384.0,958.3 400.0,960.0 408.0,960.9 426.0,962.0 455.0,960.0 466.0,963.0 495.0,960.9 509.6,959.4 578.4,960.0 593.0,963.0 783.0,962.7" fill="none" stroke="#10a050" stroke-width="1"/>
<rect x="0" y="964" width="783" height="1" fill="#f018a0"/>
<rect x="0" y="971" width="1051" height="1" fill="#bbbbbb"/>
<rect x="0" y="972" width="1051" height="1" fill="#cccccc"/>
<rect x="0" y="973" width="1051" height="1" fill="#999999"/>
<rect x="1051" y="971" width="53" height="1" fill="#8a8a8a"/>
<rect x="1051" y="972" width="53" height="1" fill="#b0b0b0"/>
<rect x="1051" y="973" width="53" height="1" fill="#777777"/>
<rect x="0" y="974" width="1051" height="13" fill="url(#pC)"/>
<rect x="0" y="987" width="1051" height="1" fill="#808080"/>
<rect x="0" y="988" width="1051" height="30" fill="#000"/>
<rect x="85" y="988" width="202" height="30" fill="url(#pB)"/>
<rect x="495" y="988" width="194" height="30" fill="url(#pB)"/>
<rect x="925" y="988" width="126" height="30" fill="url(#pB)"/>
<polygon points="0,996.5 0.0,992.8 18.0,989.0 54.0,988.4 83.0,991.0 108.7,990.2 145.0,992.8 174.0,991.7 203.0,994.6 217.4,997.5 232.0,999.3 253.6,997.5 286.0,998.2 308.0,998.9 319.0,1001.8 362.0,1001.8 377.0,1003.6 400.0,1001.8 411.7,1002.5 430.0,1000.0 455.0,996.4 462.5,995.3 477.0,998.2 498.7,998.2 524.0,1000.7 553.0,1001.8 578.4,1003.6 600.0,1007.2 622.0,1012.7 643.6,1014.5 680.0,1015.6 709.0,1017.4 734.0,1015.6 752.0,1013.4 770.4,1015.6 783.0,1014.5 783,996.5" fill="#730d00"/>
<clipPath id="b5"><rect x="85" y="988" width="202" height="30"/><rect x="495" y="988" width="194" height="30"/><rect x="925" y="988" width="126" height="30"/></clipPath>
<polygon points="0,996.5 0.0,992.8 18.0,989.0 54.0,988.4 83.0,991.0 108.7,990.2 145.0,992.8 174.0,991.7 203.0,994.6 217.4,997.5 232.0,999.3 253.6,997.5 286.0,998.2 308.0,998.9 319.0,1001.8 362.0,1001.8 377.0,1003.6 400.0,1001.8 411.7,1002.5 430.0,1000.0 455.0,996.4 462.5,995.3 477.0,998.2 498.7,998.2 524.0,1000.7 553.0,1001.8 578.4,1003.6 600.0,1007.2 622.0,1012.7 643.6,1014.5 680.0,1015.6 709.0,1017.4 734.0,1015.6 752.0,1013.4 770.4,1015.6 783.0,1014.5 783,996.5" fill="#5b330a" clip-path="url(#b5)"/>
<rect x="0" y="996" width="783" height="1" fill="#1c6c60"/>
<rect x="783" y="996" width="268" height="1" fill="#505050"/>
<polyline points="0.0,992.8 18.0,989.0 54.0,988.4 83.0,991.0 108.7,990.2 145.0,992.8 174.0,991.7 203.0,994.6 217.4,997.5 232.0,999.3 253.6,997.5 286.0,998.2 308.0,998.9 319.0,1001.8 362.0,1001.8 377.0,1003.6 400.0,1001.8 411.7,1002.5 430.0,1000.0 455.0,996.4 462.5,995.3 477.0,998.2 498.7,998.2 524.0,1000.7 553.0,1001.8 578.4,1003.6 600.0,1007.2 622.0,1012.7 643.6,1014.5 680.0,1015.6 709.0,1017.4 734.0,1015.6 752.0,1013.4 770.4,1015.6 783.0,1014.5" fill="none" stroke="#e0a000" stroke-width="1.1"/>
<path d="M586.1 757.7 h6.4 l-3.2 5.6 z" fill="#ff1010"/>
<path d="M554.2 829.4 h6.4 l-3.2 5.6 z" fill="#ff1010"/>
<path d="M390.0 790.1 h6 l-3 -5.6 z" fill="#10f010"/>
<path d="M742.1 782.8 h6 l-3 -5.6 z" fill="#10f010"/>
<path d="M304.2 876.5 h6 l-3 -5.6 z" fill="#10f010"/>
<path d="M719.2 866.2 h6 l-3 -5.6 z" fill="#10f010"/>
<rect x="1051" y="35" width="2" height="983" fill="#6c6c6c"/>
<rect x="1103" y="12" width="1" height="1023" fill="#f4f4f4"/>
<rect x="1103" y="0" width="1" height="11" fill="#b8d4ff"/>
<text x="1055" y="54.1" fill="#ececec" font-size="10">25</text>
<text x="1055" y="107.5" fill="#ececec" font-size="10">24</text>
<text x="1055" y="160.9" fill="#ececec" font-size="10">23</text>
<text x="1055" y="214.3" fill="#ececec" font-size="10">22</text>
<text x="1055" y="267.7" fill="#ececec" font-size="10">21</text>
<text x="1055" y="321.1" fill="#ececec" font-size="10">20</text>
<text x="1055" y="374.5" fill="#ececec" font-size="10">19</text>
<text x="1055" y="427.9" fill="#ececec" font-size="10">18</text>
<text x="1055" y="481.3" fill="#ececec" font-size="10">17</text>
<text x="1055" y="588.1" fill="#ececec" font-size="10">15</text>
<text x="1055" y="641.5" fill="#ececec" font-size="10">14</text>
<text x="1055" y="694.9" fill="#ececec" font-size="10">13</text>
<rect x="1053" y="524" width="50" height="14" fill="#a00000"/>
<text x="1054.5" y="534.8" fill="#fff" font-size="9.8">15,99900</text>
<g transform="translate(1093,37)"><path d="M1.6 5 v-2.4 a2.2 2.4 0 0 1 4.4 0 v2.4" fill="none" stroke="#c02020" stroke-width="1.3"/><rect x="0" y="4.6" width="7.6" height="6" rx="1" fill="#c01818"/><rect x="3" y="6.4" width="1.6" height="2.4" fill="#fff"/></g>
<g transform="translate(1093,712)"><path d="M1 4 v-2 a2.4 2.4 0 0 1 4.8 0" fill="none" stroke="#2a2a2a" stroke-width="1.2" transform="translate(-2.5,-1)"/><rect x="1" y="3" width="7.5" height="6" rx="1" fill="#2a2a2a" stroke="#777" stroke-width="0.7"/><rect x="3.7" y="5" width="2" height="2.4" fill="#999"/></g>
<g transform="translate(1093,805)"><path d="M1 4 v-2 a2.4 2.4 0 0 1 4.8 0" fill="none" stroke="#2a2a2a" stroke-width="1.2" transform="translate(-2.5,-1)"/><rect x="1" y="3" width="7.5" height="6" rx="1" fill="#2a2a2a" stroke="#777" stroke-width="0.7"/><rect x="3.7" y="5" width="2" height="2.4" fill="#999"/></g>
<g transform="translate(1093,882)"><path d="M1 4 v-2 a2.4 2.4 0 0 1 4.8 0" fill="none" stroke="#2a2a2a" stroke-width="1.2" transform="translate(-2.5,-1)"/><rect x="1" y="3" width="7.5" height="6" rx="1" fill="#2a2a2a" stroke="#777" stroke-width="0.7"/><rect x="3.7" y="5" width="2" height="2.4" fill="#999"/></g>
<g transform="translate(1093,917)"><path d="M1 4 v-2 a2.4 2.4 0 0 1 4.8 0" fill="none" stroke="#2a2a2a" stroke-width="1.2" transform="translate(-2.5,-1)"/><rect x="1" y="3" width="7.5" height="6" rx="1" fill="#2a2a2a" stroke="#777" stroke-width="0.7"/><rect x="3.7" y="5" width="2" height="2.4" fill="#999"/></g>
<g transform="translate(1093,977)"><path d="M1 4 v-2 a2.4 2.4 0 0 1 4.8 0" fill="none" stroke="#2a2a2a" stroke-width="1.2" transform="translate(-2.5,-1)"/><rect x="1" y="3" width="7.5" height="6" rx="1" fill="#2a2a2a" stroke="#777" stroke-width="0.7"/><rect x="3.7" y="5" width="2" height="2.4" fill="#999"/></g>
<text x="1055" y="765.3" fill="#fff" font-size="10.3" font-weight="bold">0</text>
<text x="1055" y="820.5" fill="#ececec" font-size="10.3">2</text>
<text x="1055" y="847" fill="#fff" font-size="10.3" font-weight="bold">0</text>
<text x="1055" y="876" fill="#ececec" font-size="10.3">-2</text>
<text x="1055" y="911" fill="#ececec" font-size="10.3">-100.000</text>
<text x="1055" y="954" fill="#ececec" font-size="10.3">20.000</text>
<text x="1055" y="999" fill="#fff" font-size="10.3" font-weight="bold">0</text>
<clipPath id="ca"><rect x="1052" y="1008" width="52" height="10"/></clipPath>
<text x="1058" y="1020" fill="#ececec" font-size="10.3" clip-path="url(#ca)">-1.000.000</text>
<rect x="0" y="707" width="1104" height="1" fill="#c8c8c8"/>
<rect x="0" y="799" width="1051" height="1" fill="#bbbbbb"/>
<rect x="0" y="800" width="1051" height="1" fill="#cccccc"/>
<rect x="0" y="801" width="1051" height="1" fill="#999999"/>
<rect x="1051" y="799" width="53" height="1" fill="#8a8a8a"/>
<rect x="1051" y="800" width="53" height="1" fill="#b0b0b0"/>
<rect x="1051" y="801" width="53" height="1" fill="#777777"/>
<rect x="0" y="876" width="1051" height="1" fill="#bbbbbb"/>
<rect x="0" y="877" width="1051" height="1" fill="#cccccc"/>
<rect x="0" y="878" width="1051" height="1" fill="#999999"/>
<rect x="1051" y="876" width="53" height="1" fill="#8a8a8a"/>
<rect x="1051" y="877" width="53" height="1" fill="#b0b0b0"/>
<rect x="1051" y="878" width="53" height="1" fill="#777777"/>
<rect x="0" y="910" width="1051" height="1" fill="#bbbbbb"/>
<rect x="0" y="911" width="1051" height="1" fill="#cccccc"/>
<rect x="0" y="912" width="1051" height="1" fill="#999999"/>
<rect x="1051" y="910" width="53" height="1" fill="#8a8a8a"/>
<rect x="1051" y="911" width="53" height="1" fill="#b0b0b0"/>
<rect x="1051" y="912" width="53" height="1" fill="#777777"/>
<rect x="0" y="971" width="1051" height="1" fill="#bbbbbb"/>
<rect x="0" y="972" width="1051" height="1" fill="#cccccc"/>
<rect x="0" y="973" width="1051" height="1" fill="#999999"/>
<rect x="1051" y="971" width="53" height="1" fill="#8a8a8a"/>
<rect x="1051" y="972" width="53" height="1" fill="#b0b0b0"/>
<rect x="1051" y="973" width="53" height="1" fill="#777777"/>
<rect x="0" y="1018" width="1052" height="1" fill="#6e1a1a"/>
<rect x="0" y="1019" width="1104" height="14" fill="url(#pA)"/>
<rect x="0" y="1033" width="1104" height="1" fill="#c85000"/>
<rect x="0" y="1034" width="1104" height="1" fill="#ff6600"/>
<rect x="589.5" y="1018.5" width="325" height="14.5" fill="url(#pD)" stroke="#b84840" stroke-width="1"/>
<rect x="748" y="1022" width="1.4" height="8" fill="#b04030"/>
<rect x="752" y="1022" width="1.4" height="8" fill="#b04030"/>
<rect x="756" y="1022" width="1.4" height="8" fill="#b04030"/>
<rect x="1037.5" y="1018.5" width="15" height="14.5" fill="url(#pD)" stroke="#b84840" stroke-width="1"/>
<path d="M1043.5 1022 v7.2 l4.6 -3.6 z" fill="#901808"/>
<rect x="1053" y="1018" width="51" height="15" fill="#d2d2d2"/>
<path d="M1061.8 1027.2 l4 4" stroke="#333" stroke-width="3.2" stroke-linecap="round"/>
<path d="M1062.6 1028 l2.8 2.8" stroke="#e0b000" stroke-width="1.8" stroke-linecap="round"/>
<circle cx="1059" cy="1024.2" r="3.7" fill="#e8f4ff" stroke="#3a3a3a" stroke-width="1.1"/>
<path d="M1056.7 1024.2 h4.6" stroke="#333" stroke-width="1"/>
<path d="M1059 1021.9 v4.6" stroke="#333" stroke-width="1"/>
<path d="M1078.8 1027.2 l4 4" stroke="#333" stroke-width="3.2" stroke-linecap="round"/>
<path d="M1079.6 1028 l2.8 2.8" stroke="#e0b000" stroke-width="1.8" stroke-linecap="round"/>
<circle cx="1076" cy="1024.2" r="3.7" fill="#e8f4ff" stroke="#3a3a3a" stroke-width="1.1"/>
<path d="M1073.7 1024.2 h4.6" stroke="#333" stroke-width="1"/>
<path d="M1097.3 1027.2 l4 4" stroke="#333" stroke-width="3.2" stroke-linecap="round"/>
<path d="M1098.1 1028 l2.8 2.8" stroke="#e0b000" stroke-width="1.8" stroke-linecap="round"/>
<circle cx="1094.5" cy="1024.2" r="3.7" fill="#e8f4ff" stroke="#3a3a3a" stroke-width="1.1"/>
</svg>
</body></html>
